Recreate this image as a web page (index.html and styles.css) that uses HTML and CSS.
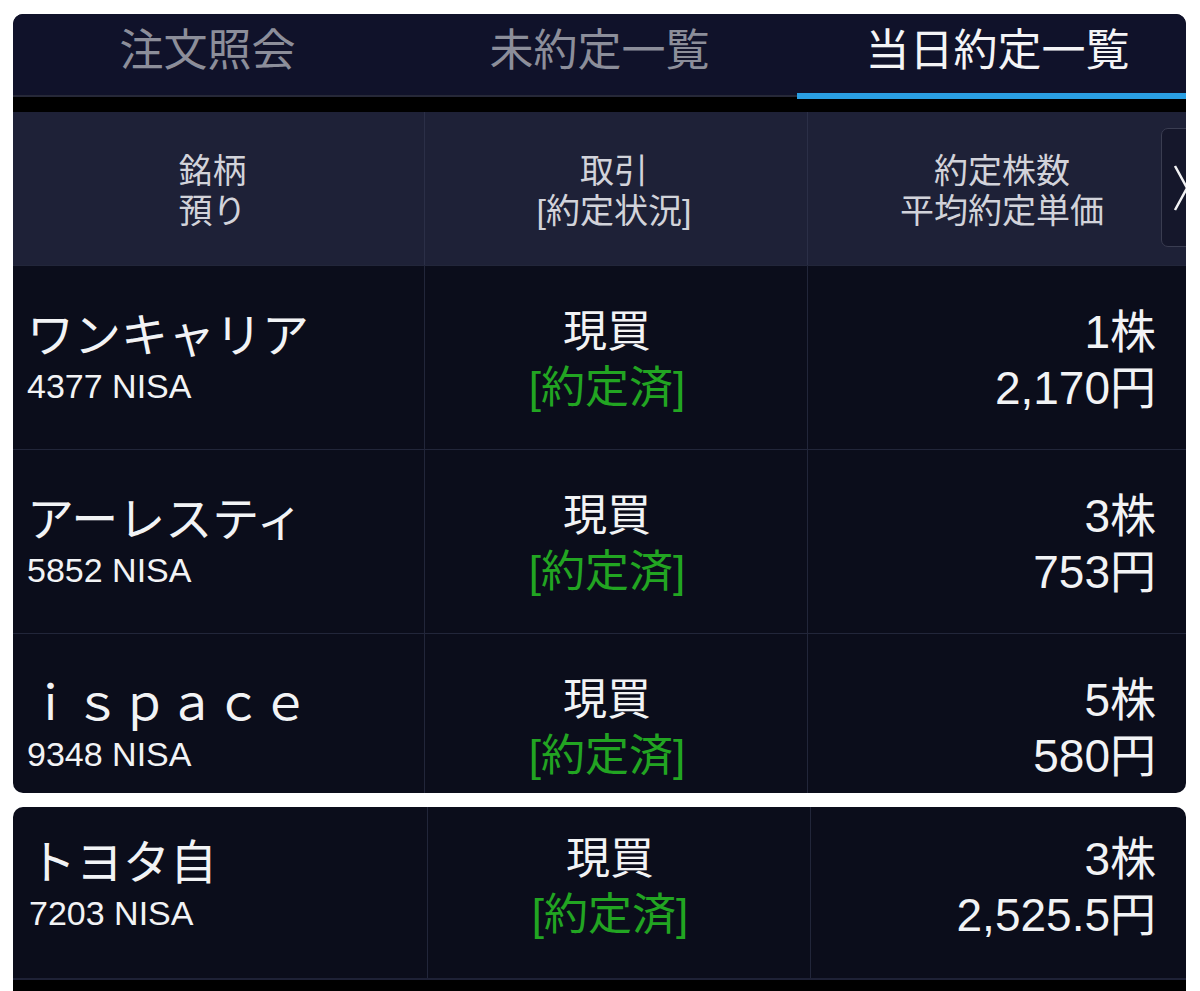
FILE: index.html
```html
<!DOCTYPE html>
<html lang="ja">
<head>
    <meta charset="UTF-8">
    <meta name="viewport" content="width=device-width, initial-scale=1.0">
    <title>当日約定一覧</title>
    <link rel="stylesheet" href="styles.css">
</head>
<body>
    <div class="page">
        <div class="card card-main">
            <div class="tabs">
                <div class="tab">注文照会</div>
                <div class="tab">未約定一覧</div>
                <div class="tab active">当日約定一覧</div>
            </div>
            <div class="band"></div>

            <div class="head-row">
                <div class="head-cell head-name">銘柄<br>預り</div>
                <div class="head-cell head-trade">取引<br>[約定状況]</div>
                <div class="head-cell head-qty">
                    約定株数<br>平均約定単価
                    <div class="more-btn">
                        <svg width="20" height="50" viewBox="0 0 20 50">
                            <path d="M2 3 L14 25 L2 47" fill="none" stroke="#f2f2f4" stroke-width="2.5"/>
                        </svg>
                    </div>
                </div>
            </div>

            <div class="row">
                <div class="cell cell-name">
                    <div class="stock-name">ワンキャリア</div>
                    <div class="stock-code">4377 NISA</div>
                </div>
                <div class="cell cell-trade">
                    <div>現買</div>
                    <div class="status">[約定済]</div>
                </div>
                <div class="cell cell-qty">
                    <div>1株</div>
                    <div>2,170円</div>
                </div>
            </div>

            <div class="row">
                <div class="cell cell-name">
                    <div class="stock-name">アーレスティ</div>
                    <div class="stock-code">5852 NISA</div>
                </div>
                <div class="cell cell-trade">
                    <div>現買</div>
                    <div class="status">[約定済]</div>
                </div>
                <div class="cell cell-qty">
                    <div>3株</div>
                    <div>753円</div>
                </div>
            </div>

            <div class="row">
                <div class="cell cell-name">
                    <div class="stock-name">ｉｓｐａｃｅ</div>
                    <div class="stock-code">9348 NISA</div>
                </div>
                <div class="cell cell-trade">
                    <div>現買</div>
                    <div class="status">[約定済]</div>
                </div>
                <div class="cell cell-qty">
                    <div>5株</div>
                    <div>580円</div>
                </div>
            </div>
        </div>

        <div class="card card-sub">
            <div class="row row-cut">
                <div class="cell cell-name">
                    <div class="stock-name">トヨタ自</div>
                    <div class="stock-code">7203 NISA</div>
                </div>
                <div class="cell cell-trade">
                    <div>現買</div>
                    <div class="status">[約定済]</div>
                </div>
                <div class="cell cell-qty">
                    <div>3株</div>
                    <div>2,525.5円</div>
                </div>
            </div>
            <div class="foot"></div>
        </div>
    </div>
</body>
</html>
```

FILE: styles.css
```css
body {
    margin: 0;
    background-color: #ffffff;
    font-family: "Liberation Sans", "Noto Sans CJK JP", sans-serif;
    color: #f2f3f5;
}
.page {
    display: flex;
    flex-direction: column;
    gap: 14px;
    padding: 14px 14px 0 13px;
}
.card {
    background-color: #0b0d1b;
    overflow: hidden;
}
.card-main {
    height: 779px;
    border-radius: 10px;
}
.card-sub {
    border-radius: 10px 10px 0 0;
}

/* タブ */
.tabs {
    display: grid;
    grid-template-columns: 389px 395px 1fr;
    height: 81px;
    background-color: #10122a;
    border-bottom: 2px solid #262838;
}
.tab {
    position: relative;
    display: flex;
    align-items: center;
    justify-content: center;
    padding-bottom: 16px;
    font-family: "Noto Sans CJK JP", sans-serif;
    font-size: 44px;
    color: #8c8e9a;
}
.tab.active {
    color: #f4f4f6;
    padding-left: 12px;
}
.tab.active::after {
    content: "";
    position: absolute;
    left: 0;
    right: 0;
    bottom: -4px;
    height: 6px;
    background-color: #2a9fe3;
}
.band {
    height: 15px;
    background-color: #000000;
}

/* 見出し */
.head-row {
    display: grid;
    grid-template-columns: 411px 383px 1fr;
    height: 153px;
    background-color: #1e2137;
}
.head-cell {
    position: relative;
    display: flex;
    align-items: center;
    justify-content: center;
    padding-top: 4px;
    text-align: center;
    font-size: 34px;
    line-height: 40px;
    color: #d2d3da;
    border-left: 1px solid #2b2f47;
}
.head-name {
    border-left: none;
    padding-right: 12px;
}
.head-trade {
    padding-right: 4px;
}
.head-qty {
    padding-left: 10px;
}
.more-btn {
    position: absolute;
    top: 16px;
    left: 353px;
    width: 40px;
    height: 119px;
    box-sizing: border-box;
    border: 1px solid #3a3d51;
    border-radius: 7px;
    background-color: #15172b;
    display: flex;
    align-items: center;
    padding-left: 11px;
}

/* 明細 */
.row {
    display: grid;
    grid-template-columns: 411px 383px 1fr;
    height: 184px;
    box-sizing: border-box;
    border-top: 1px solid #22263a;
}
.cell {
    padding-top: 38px;
    font-size: 44px;
    line-height: 56px;
    border-left: 1px solid #22263a;
}
.cell-name {
    border-left: none;
    padding-left: 14px;
    padding-top: 41px;
}
.stock-name {
    font-size: 47px;
    line-height: 58px;
}
.stock-code {
    font-size: 34px;
    line-height: 36px;
    margin-top: 3px;
}
.cell-trade {
    text-align: center;
    padding-right: 18px;
}
.status {
    color: #22a522;
}
.cell-qty {
    text-align: right;
    padding-right: 30px;
    font-size: 46px;
}
.row-cut {
    height: 171px;
    border-top: none;
    grid-template-columns: 414px 383px 1fr;
}
.row-cut .cell {
    padding-top: 24px;
}
.row-cut .cell-name {
    padding-top: 27px;
    padding-left: 16px;
}
.foot {
    height: 13px;
    border-top: 2px solid #1e2136;
    background-color: #000000;
}
```
